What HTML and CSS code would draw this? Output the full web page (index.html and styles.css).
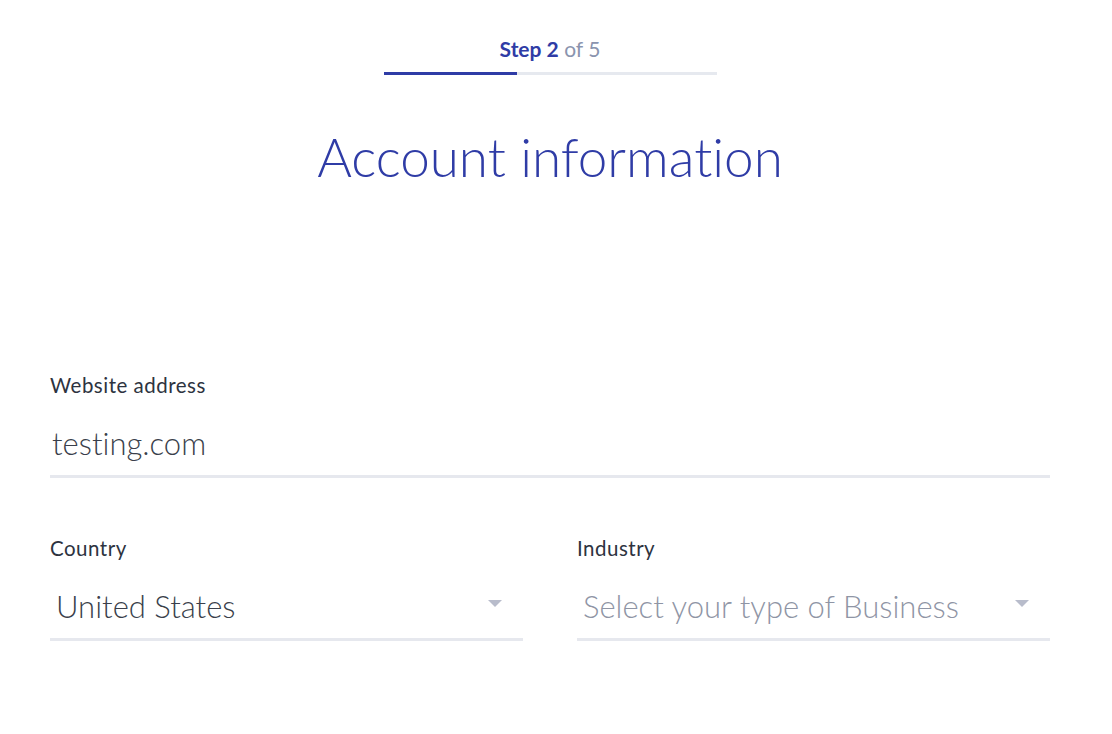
FILE: index.html
```html
<!DOCTYPE html>
<html>
<head>
<meta charset="utf-8">
<link rel="stylesheet" href="styles.css">
</head>
<body>
<div class="page">
  <div class="stepper">
    <div class="step-text"><span class="step-cur">Step 2</span> <span class="step-of">of 5</span></div>
    <div class="bar"><div class="bar-fill" style="width:40%"></div></div>
  </div>
  <h1 class="title">Account information</h1>
  <form class="form">
    <div class="field">
      <label class="label">Website address</label>
      <div class="control"><span class="value">testing.com</span></div>
    </div>
    <div class="row">
      <div class="field">
        <label class="label">Country</label>
        <div class="control select"><span class="value">United States</span><span class="caret"></span></div>
      </div>
      <div class="field">
        <label class="label">Industry</label>
        <div class="control select"><span class="value placeholder">Select your type of Business</span><span class="caret"></span></div>
      </div>
    </div>
  </form>
</div>
</body>
</html>
```
FILE: styles.css
```css
html, body { margin: 0; padding: 0; background: #fff; }
body { font-family: Lato, "Open Sans", sans-serif; color: #2d3340; font-variant-ligatures: none; }
.page { width: 1000px; margin-left: 50px; padding-top: 37px; }
.stepper { width: 333px; margin: 0 auto; display: flex; flex-direction: column; align-items: center; }
.step-text { font-size: 21px; line-height: 24px; }
.step-cur { font-weight: 700; color: #2f3ca6; }
.step-of { color: #8a94ae; }
.bar { width: 100%; height: 3px; background: #e6e9ef; margin-top: 11px; }
.bar-fill { height: 100%; background: #2f3ca6; }
.title { margin: 50px 0 0; text-align: center; font-weight: 300; font-size: 53px; line-height: 64px; color: #2f3ca6; }
.form { margin-top: 184px; display: flex; flex-direction: column; gap: 58px; }
.row { display: flex; gap: 54px; }
.row .field { flex: 1; }
.label { display: block; font-size: 20.5px; line-height: 24px; letter-spacing: 0.5px; color: #2d3340; }
.control { margin-top: 28px; padding: 0 2px 14px 2px; border-bottom: 3px solid #e6e8ee; display: flex; align-items: center; }
.value { font-size: 31px; font-weight: 300; color: #3a3f4b; line-height: 36px; flex: 1; }
.select .value { padding-left: 4px; }
.placeholder { color: #8f95a5; }
.caret { width: 0; height: 0; border-left: 7.5px solid transparent; border-right: 7.5px solid transparent; border-top: 7px solid #b8bccb; margin-right: 19px; margin-bottom: 5px; }
```
